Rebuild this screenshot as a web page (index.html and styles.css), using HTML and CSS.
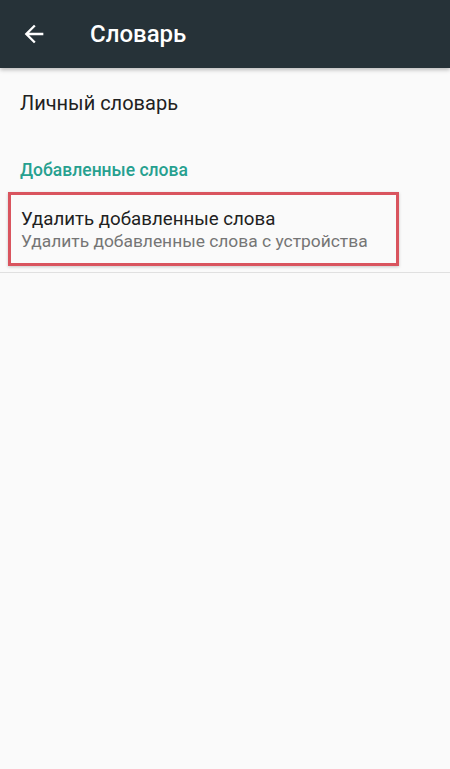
FILE: index.html
```html
<!DOCTYPE html>
<html lang="ru">
  <head>
    <meta charset="UTF-8" />
    <meta name="viewport" content="width=device-width, initial-scale=1.0" />
    <title>Словарь</title>
    <link rel="stylesheet" href="styles.css">
  </head>
  <body>
    <div class="toolbar">
      <svg class="back" viewBox="0 0 24 24" width="28" height="28">
        <path d="M20 11H7.83l5.59-5.59L12 4l-8 8 8 8 1.41-1.41L7.83 13H20v-2z" fill="#fff"/>
      </svg>
      <h1>Словарь</h1>
    </div>

    <div class="pref single">Личный словарь</div>

    <div class="category">Добавленные слова</div>

    <div class="pref double">
      <div class="highlight">
        <div class="title">Удалить добавленные слова</div>
        <div class="summary">Удалить добавленные слова с устройства</div>
      </div>
    </div>
    <div class="divider"></div>
  </body>
</html>
```

FILE: styles.css
```css
body {
  margin: 0;
  background-color: #fafafa;
  font-family: Roboto, "Noto Sans", sans-serif;
}

.toolbar {
  height: 68px;
  background-color: #263238;
  display: flex;
  align-items: center;
  padding-left: 20px;
  box-shadow: 0 2px 4px rgba(0, 0, 0, 0.25);
}

.back {
  display: block;
}

.toolbar h1 {
  margin: 0 0 0 42px;
  font-size: 24px;
  font-weight: 500;
  color: #fff;
}

.pref.single {
  height: 70px;
  display: flex;
  align-items: center;
  padding: 0 20px;
  font-size: 20px;
  color: #212121;
}

.category {
  padding: 22px 20px 0;
  height: 28px;
  font-size: 17.5px;
  font-weight: 500;
  color: #26a08f;
}

/* red frame from the screenshot */
.pref.double {
  padding: 4px 51px 6px 8px;
}

.highlight {
  border: 3px solid #d9545e;
  height: 68px;
  padding: 0 10px;
  display: flex;
  flex-direction: column;
  justify-content: center;
  box-shadow: 0 1px 3px rgba(0, 0, 0, 0.2);
}

.title {
  font-size: 18.7px;
  color: #212121;
}

.summary {
  margin-top: 1px;
  font-size: 17.4px;
  color: #757575;
}

.divider {
  height: 1px;
  background-color: #e0e0e0;
}
```
